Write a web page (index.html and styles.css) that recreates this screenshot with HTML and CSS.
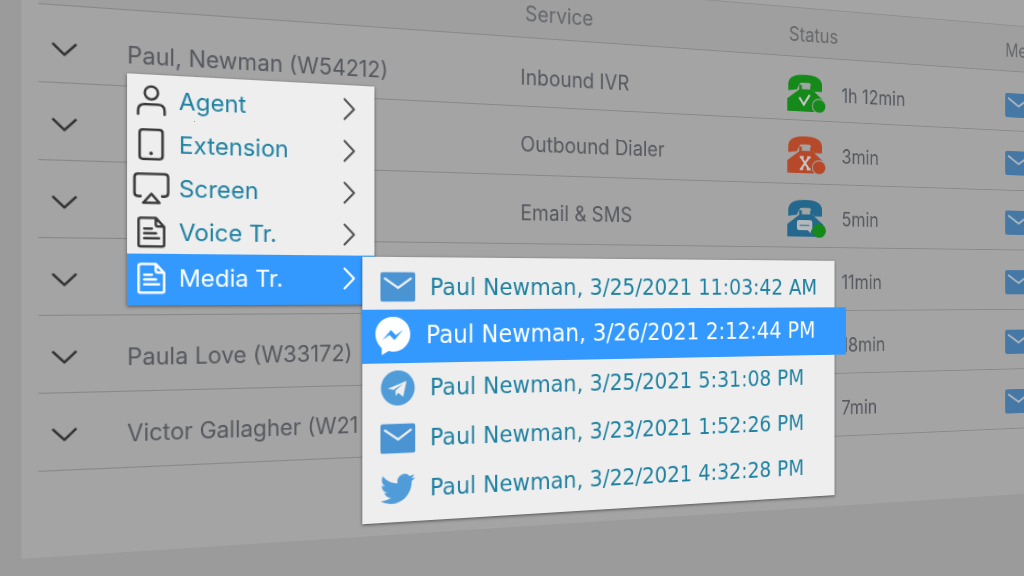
FILE: index.html
```html
<!DOCTYPE html>
<html lang="en">
<head>
<meta charset="utf-8">
<title>Agents</title>
<link rel="stylesheet" href="styles.css">
</head>
<body>
<svg class="defs" aria-hidden="true">
  <symbol id="down" viewBox="0 0 22 12"><path d="M1.5 1.2 11 10.5 20.500 1.200" fill="none" stroke="currentColor" stroke-width="2.200" stroke-linecap="round" stroke-linejoin="round"/></symbol>
  <symbol id="next" viewBox="0 0 12 22"><path d="M1.500 1.500 10.800 11 1.500 20.500" fill="none" stroke="currentColor" stroke-width="2" stroke-linecap="round" stroke-linejoin="round"/></symbol>
  <symbol id="mail" viewBox="0 0 35 29" preserveAspectRatio="none"><rect width="35" height="29" rx="2.500" fill="currentColor" stroke="none"/><path d="M4.500 6.300 17.700 15.500 30.500 6.300" fill="none" stroke-width="2.200" stroke-linecap="round"/></symbol>
  <symbol id="doc" viewBox="0 0 28 32"><path d="M3.500 1.500h14.800l8.200 9v18q0 1.700-1.700 1.700H3.200q-1.700 0-1.700-1.700v-25.300q0-1.700 2-1.700zM18.300 1.500v6.500q0 2 2 2h6M7 12.200h7.500M7 17h11.500M7 22h14.500" fill="none" stroke="currentColor" stroke-width="2.500" stroke-linecap="round" stroke-linejoin="round"/></symbol>
  <symbol id="phone" viewBox="0 0 39 38"><path d="M1 16.500V9C2 2.500 8 0 18 0S34 2.500 35 9v7.500h-8.500L24 10q-.5-2-2.500-2h-7q-2 0-2.500 2l-2.500 5z"/><path d="M0 37V24.500L12 15V10.500h2.500V14.500h8.500V10.500H25.500V15L36 24.500V37z"/></symbol>
</svg>
<main class="scene">
  <div class="plane">
    <section class="board">
      <table class="agents">
        <colgroup><col class="c-toggle"><col class="c-name"><col class="c-service"><col class="c-phone"><col class="c-time"><col></colgroup>
        <thead>
          <tr><th></th><th></th><th class="th-service">Service</th><th class="th-status" colspan="2">Status</th><th>Me</th></tr>
        </thead>
        <tbody>
          <tr class="first">
            <td><button class="toggle" aria-label="Expand"><svg><use href="#down"/></svg></button></td>
            <td class="name">Paul, Newman (W54212)</td><td>Inbound IVR</td>
            <td><svg class="phone green" viewBox="0 0 39 38" preserveAspectRatio="none"><use href="#phone"/><path class="mark" d="m12 23 4.500 7 6-10"/><circle cx="32" cy="31" r="7"/></svg></td>
            <td class="time">1h 12min</td><td><svg class="media"><use href="#mail"/></svg></td>
          </tr>
          <tr>
            <td><button class="toggle" aria-label="Expand"><svg><use href="#down"/></svg></button></td>
            <td></td><td>Outbound Dialer</td>
            <td><svg class="phone red" viewBox="0 0 39 38" preserveAspectRatio="none"><use href="#phone"/><path class="mark" d="m14 21.500 7.500 11M21.500 21.500 14 32.500M12.500 21h4M20 21h3.500M12.500 33h3.500M19.500 33h4"/><circle cx="32" cy="31" r="7"/></svg></td>
            <td class="time">3min</td><td><svg class="media"><use href="#mail"/></svg></td>
          </tr>
          <tr>
            <td><button class="toggle" aria-label="Expand"><svg><use href="#down"/></svg></button></td>
            <td></td><td>Email &amp; SMS</td>
            <td><svg class="phone blue" viewBox="0 0 39 38" preserveAspectRatio="none"><use href="#phone"/><path class="bubble" d="M11.500 20.500H23q2 0 2 2v6q0 2-1 2l-.5 3-3-3h-9q-2 0-2-2v-6q0-2 2-2z"/><path class="dash" d="M12.500 25.700h9.500"/><circle cx="32" cy="31" r="7"/></svg></td>
            <td class="time">5min</td><td><svg class="media"><use href="#mail"/></svg></td>
          </tr>
          <tr>
            <td><button class="toggle" aria-label="Expand"><svg><use href="#down"/></svg></button></td>
            <td></td><td></td><td></td><td class="time">11min</td><td><svg class="media"><use href="#mail"/></svg></td>
          </tr>
          <tr>
            <td><button class="toggle" aria-label="Expand"><svg><use href="#down"/></svg></button></td>
            <td class="name">Paula Love (W33172)</td><td></td><td></td><td class="time">18min</td><td><svg class="media"><use href="#mail"/></svg></td>
          </tr>
          <tr>
            <td><button class="toggle" aria-label="Expand"><svg><use href="#down"/></svg></button></td>
            <td class="name">Victor Gallagher (W21</td><td></td><td></td><td class="time">7min</td><td><svg class="media"><use href="#mail"/></svg></td>
          </tr>
        </tbody>
      </table>
    </section>

    <nav class="menu">
      <button class="item"><svg class="icon" viewBox="0 0 36 32"><g fill="none" stroke="currentColor" stroke-width="2.500" stroke-linecap="round"><circle cx="18" cy="8.500" r="6.500"/><path d="M5 30v-3.500q0-6.500 6.500-6.500h13q6.500 0 6.500 6.500V30"/></g></svg><span>Agent</span><svg class="next"><use href="#next"/></svg></button>
      <button class="item"><svg class="icon" viewBox="0 0 36 32"><rect x="6.500" y="1.300" width="22.500" height="29.400" rx="3" fill="none" stroke="currentColor" stroke-width="2.500"/><circle cx="17.700" cy="25" r="1.800" fill="currentColor"/></svg><span>Extension</span><svg class="next"><use href="#next"/></svg></button>
      <button class="item"><svg class="icon" viewBox="0 0 36 32"><g fill="none" stroke="currentColor" stroke-width="2.500" stroke-linecap="round" stroke-linejoin="round"><path d="M7.500 24H5q-3.500 0-3.500-3.500V5q0-3.500 3.500-3.500h26q3.500 0 3.500 3.500v15.500q0 3.500-3.500 3.500h-2.500M18 21.500l8 9H10z"/></g></svg><span>Screen</span><svg class="next"><use href="#next"/></svg></button>
      <button class="item"><svg class="icon"><use href="#doc"/></svg><span>Voice Tr.</span><svg class="next"><use href="#next"/></svg></button>
      <button class="item active"><svg class="icon"><use href="#doc"/></svg><span>Media Tr.</span><svg class="next"><use href="#next"/></svg></button>
    </nav>

    <nav class="submenu">
      <button class="entry"><svg class="logo mail" viewBox="0 0 35 29"><use href="#mail"/></svg><span>Paul Newman, 3/25/2021 11:03:42 AM</span></button>
      <button class="entry active"><svg class="logo" viewBox="0 0 37 38"><path d="M18.500 0C8 0 .5 7.500.5 17c0 6 3 11 6.500 14v7l7-4q2.500.7 4.500.7C29 34.700 36.500 27 36.500 17.500S29 0 18.500 0z" fill="#fff"/><path d="m7.500 23 9-9.800 5 5 7.500-5-9 9.800-5-5z" fill="#3399ff"/></svg><span>Paul Newman, 3/26/2021 2:12:44 PM</span></button>
      <button class="entry"><svg class="logo" viewBox="0 0 35 35"><circle cx="17.500" cy="17.500" r="17.500" fill="#4f9cd9"/><path d="M7 18 26.500 10.500 23 26.500l-5-4-2.700 3-.3-5.500 8-7-10 6.300z" fill="#eee"/></svg><span>Paul Newman, 3/25/2021 5:31:08 PM</span></button>
      <button class="entry"><svg class="logo mail" viewBox="0 0 35 29"><use href="#mail"/></svg><span>Paul Newman, 3/23/2021 1:52:26 PM</span></button>
      <button class="entry"><svg class="logo" viewBox="0 2 24 20"><path fill="#4f9cd9" d="M23.950 4.570a10 10 0 0 1-2.820.77 4.960 4.960 0 0 0 2.160-2.720c-.95.550-2 .950-3.120 1.180a4.920 4.920 0 0 0-8.380 4.480C7.690 8.090 4.070 6.130 1.640 3.160a4.820 4.820 0 0 0-.67 2.480c0 1.710.87 3.210 2.190 4.100a4.900 4.900 0 0 1-2.230-.62v.06a4.920 4.920 0 0 0 3.950 4.830 5 5 0 0 1-2.210.08 4.940 4.940 0 0 0 4.600 3.420A9.870 9.870 0 0 1 0 19.540a14 14 0 0 0 7.550 2.210c9.050 0 14-7.500 14-13.990 0-.21 0-.42-.02-.63a9.940 9.940 0 0 0 2.460-2.550z"/></svg><span>Paul Newman, 3/22/2021 4:32:28 PM</span></button>
    </nav>
  </div>
</main>
</body>
</html>
```
FILE: styles.css
```css
* { box-sizing: border-box; }

body {
  margin: 0;
  overflow: hidden;
  background: #9b9b9b;
  font-family: Inter, "Liberation Sans", sans-serif;
}

.defs { position: absolute; width: 0; height: 0; }

button {
  border: 0;
  padding: 0;
  background: none;
  font: inherit;
  color: inherit;
  text-align: left;
}

/* The board is viewed at an angle, its right side further away. */
.scene {
  min-height: 100vh;
  overflow: hidden;
  perspective: 1400px;
  perspective-origin: 50% 290px;
}

.plane {
  position: relative;
  display: flow-root;
  min-height: 100vh;
  transform: rotateY(21deg);
  transform-origin: 50% 290px;
}

.board {
  margin: -120px -260px 0 49px;
  padding: 103px 0 76px 14px;
  background: #a4a4a4;
}

.agents {
  width: 100%;
  table-layout: fixed;
  border-collapse: separate;
  border-spacing: 0;
  font-size: 21px;
  color: #55585e;
}

.c-toggle { width: 76px; }
.c-name { width: 382px; }
.c-service { width: 310px; }
.c-phone { width: 69px; }
.c-time { width: 223px; }

.agents th {
  height: 54px;
  padding: 5px 0 0;
  background: #9f9f9f;
  border-top: 1px solid #8e8e8e;
  border-bottom: 1px solid #888;
  text-align: left;
  font-weight: 400;
  color: #65676b;
}

.agents .th-service { padding-left: 5px; }
.agents .th-status { padding-left: 2px; }

.agents td {
  height: 69px;
  padding: 6px 0 0;
  border-bottom: 1px solid #888;
  white-space: nowrap;
}

.agents .first td { padding-top: 10px; }
.agents .first .name { padding-top: 12px; }

.toggle { display: block; margin-left: 11px; color: #303030; }
.toggle svg { display: block; width: 22px; height: 12px; }

.phone { display: block; width: 49px; height: 41px; }
.green { fill: #15891a; }
.red { fill: #b5492a; }
.blue { fill: #24688d; }
.phone circle { stroke: #a4a4a4; stroke-width: 1; }
.blue circle { fill: #15891a; stroke: none; }
.mark { fill: none; stroke: #c8c8c8; stroke-width: 2; }
.bubble { fill: #b4b8ba; }
.dash { stroke: #24688d; stroke-width: 1; }

.media {
  display: block;
  width: 38px;
  height: 28px;
  color: #4578a5;
  stroke: #adb6be;
}

.mail { color: #4b94d4; stroke: #f0f2f4; }

.menu, .submenu {
  position: absolute;
  display: flex;
  flex-direction: column;
  background: #eee;
  color: #1f81a1;
  box-shadow: 0 1px 3px rgba(0, 0, 0, 0.5);
}

.menu {
  left: 139px;
  top: 94px;
  width: 231px;
  padding-top: 3px;
  font-size: 22px;
}

.item {
  display: flex;
  align-items: center;
  height: 40px;
  padding: 0 19px 0 5px;
}

.item span { flex: 1; margin-left: 8px; }
.icon { width: 33px; height: 29px; color: #3a3a3a; }
.next { width: 12px; height: 22px; color: #555; }

.item.active {
  height: 47px;
  padding-bottom: 3px;
  background: #3399ff;
  color: #fff;
}
.item.active svg { color: #fff; }

.submenu {
  left: 358px;
  top: 258px;
  width: 533px;
  padding: 5px 0 7px;
  font-family: "DejaVu Sans", sans-serif;
  font-size: 23px;
}

.entry {
  display: flex;
  align-items: center;
  gap: 15px;
  height: 49px;
  padding: 0 0 2px 18px;
  white-space: nowrap;
}

.logo { flex: none; width: 35px; height: 34px; }

.entry.active {
  height: 52px;
  margin: -3px -15px 0 -1px;
  padding-left: 13px;
  background: #3399ff;
  color: #fff;
  font-size: 24px;
}
.entry.active .logo { width: 37px; height: 37px; }
```
